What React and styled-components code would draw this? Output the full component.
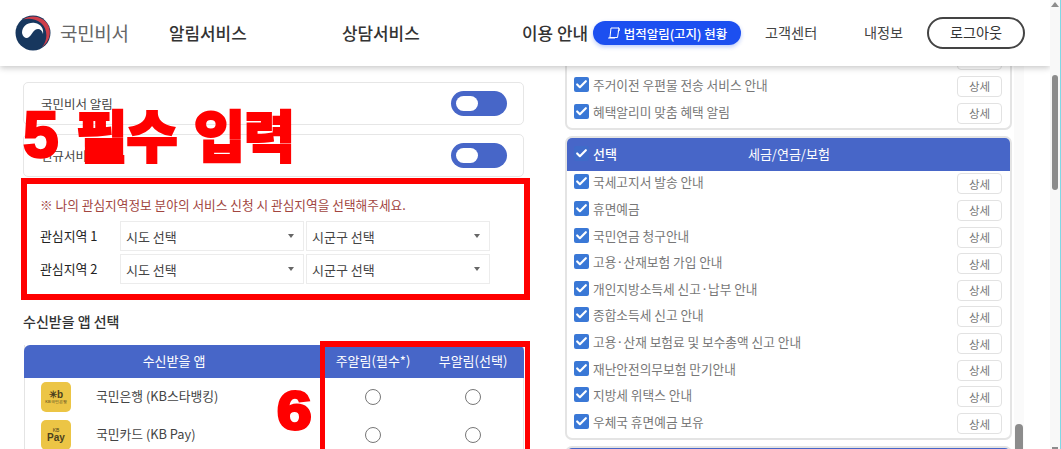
import React from 'react'
import styled, { createGlobalStyle } from 'styled-components'
import { Check } from 'lucide-react'

const GlobalStyle = createGlobalStyle`
  html, body { margin: 0; padding: 0; background: #fff; overflow: hidden; }
  * { box-sizing: border-box; }
  body { font-family: "Noto Sans CJK KR", "Noto Sans", sans-serif; }
`

const Page = styled.div`
  width: 1061px;
  height: 449px;
  display: flex;
  overflow: hidden;
`
const Screen = styled.div`
  width: 1050px;
  display: flex;
  flex-direction: column;
`
const Header = styled.header`
  height: 66px;
  flex: none;
  position: relative;
  z-index: 2;
  background: #fff;
  box-shadow: 0 2px 6px rgba(0, 0, 0, 0.22);
  display: flex;
  align-items: center;
  padding-left: 15px;
`
const Brand = styled.div`
  width: 154px;
  display: flex;
  align-items: center;
  gap: 9px;
  font-size: 19px;
  color: #666;
  letter-spacing: -0.3px;
`
const BrandName = styled.span`
  margin-bottom: 2px;
`
const NavItem = styled.a`
  width: ${(p) => p.$w}px;
  margin-bottom: 2px;
  font-size: 16.9px;
  font-weight: 500;
  color: #333;
  white-space: nowrap;
`
const Pill = styled.div`
  width: 148px;
  height: 24px;
  margin-right: 24px;
  border-radius: 12px;
  background: #1c4ff0;
  box-shadow: 0 2px 4px rgba(28, 79, 240, 0.3);
  color: #fff;
  font-size: 12.5px;
  font-weight: 500;
  display: flex;
  align-items: center;
  justify-content: center;
  gap: 3px;
  white-space: nowrap;
`
const SubNav = styled.a`
  width: ${(p) => p.$w}px;
  margin-bottom: 2px;
  font-size: 14.2px;
  color: #444;
  white-space: nowrap;
`
const Logout = styled.button`
  width: 98px;
  height: 32px;
  padding: 0 0 2px;
  border: 2px solid #444;
  border-radius: 16px;
  background: #fff;
  font-family: inherit;
  font-size: 14.2px;
  color: #333;
`
const Main = styled.main`
  flex: 1;
  min-height: 0;
  display: flex;
  overflow: hidden;
`
const LeftCol = styled.section`
  width: 565px;
  flex: none;
  padding: 16px 41px 0 23px;
`
const SwitchCard = styled.div`
  height: 43px;
  margin-bottom: 9px;
  padding: 0 16px 0 17px;
  border: 1px solid #e6e6e6;
  border-radius: 5px;
  display: flex;
  align-items: center;
  justify-content: space-between;
  font-size: 12.5px;
  color: #444;
`
const Toggle = styled.span`
  width: 56px;
  height: 25px;
  border-radius: 13px;
  background: #4766c8;
  padding: 5px;
  display: block;
  &::before {
    content: '';
    display: block;
    width: 22px;
    height: 15px;
    border-radius: 8px;
    background: #fff;
  }
`
const RegionBox = styled.div`
  margin: -8px -6px 0 -2px;
  height: 122px;
  border: 6px solid #ff0000;
  padding: 12px 0 0 13px;
`
const Notice = styled.p`
  margin: 0 0 7px;
  font-size: 12.7px;
  line-height: 18px;
  color: #a2463f;
`
const RegionRow = styled.div`
  display: flex;
  align-items: center;
  height: 30px;
  margin-bottom: 3px;
`
const RegionLabel = styled.span`
  width: 80px;
  margin-bottom: 2px;
  font-size: 12.9px;
  color: #222;
`
const FakeSelect = styled.div`
  width: 184px;
  height: 100%;
  margin-right: 2px;
  padding: 0 6px 0 5px;
  border: 1px solid #ececec;
  display: flex;
  align-items: center;
  justify-content: space-between;
  font-size: 13px;
  color: #444;
  &::after {
    content: '';
    margin-right: 3px;
    border-left: 3px solid transparent;
    border-right: 3px solid transparent;
    border-top: 4px solid #666;
  }
`
const SectionTitle = styled.h3`
  margin: 11px 0 14px;
  font-size: 14px;
  line-height: 20px;
  font-weight: 500;
  color: #333;
`
const TableWrap = styled.div`
  position: relative;
  width: 500px;
  margin-left: 1px;
  box-shadow: inset 1px 0 #e4e4e4, inset -1px 0 #e4e4e4;
`
const TableRow = styled.div`
  display: grid;
  grid-template-columns: 300px 98px 1fr;
  align-items: center;
  height: ${(p) => p.$h}px;
`
const TableHead = styled(TableRow)`
  padding-bottom: 3px;
  background: #4766c8;
  border-radius: 6px 6px 0 0;
  color: #fff;
  font-size: 13px;
  text-align: center;
`
const AppCell = styled.div`
  display: flex;
  align-items: center;
  padding-left: 17px;
  gap: 25px;
  font-size: 12.8px;
  color: #444;
`
const AppName = styled.span`
  margin-bottom: 4px;
`
const AppIcon = styled.span`
  width: 30px;
  height: 30px;
  flex: none;
  border-radius: 5px;
  background: #ecc545;
  color: #4b3f1d;
  display: flex;
  flex-direction: column;
  align-items: center;
  justify-content: center;
  line-height: 1;
  font-family: "Liberation Sans", sans-serif;
`
const Tiny = styled.span`
  font-size: ${(p) => p.$s}px;
  font-weight: ${(p) => p.$b || 400};
`
const RadioCell = styled.div`
  display: flex;
  justify-content: center;
`
const Radio = styled.span`
  width: 16px;
  height: 16px;
  border-radius: 50%;
  border: 1px solid #777;
  background: #fff;
`
const Outline = styled.div`
  position: absolute;
  top: -4px;
  left: 296px;
  right: -6px;
  height: 200px;
  border: 5px solid #ff0000;
  border-top-width: 6px;
  pointer-events: none;
`
const Big = styled.div`
  position: absolute;
  color: #ff0000;
  font-weight: 900;
  white-space: nowrap;
  pointer-events: none;
  z-index: 1;
`
const Big5 = styled(Big)`
  left: 23px;
  top: 95px;
  font-size: 56px;
  line-height: 76px;
  word-spacing: 6px;
  letter-spacing: -1.4px;
  -webkit-text-stroke: 2px #ff0000;
`
const Digit = styled.span`
  font-family: "Liberation Sans", sans-serif;
  font-size: 64px;
  font-weight: 700;
  letter-spacing: 0;
  -webkit-text-stroke: 2.5px #ff0000;
`
const Big6 = styled(Big)`
  left: 277px;
  top: 380px;
  font-family: "Liberation Sans", sans-serif;
  font-size: 54px;
  font-weight: 700;
  line-height: 60px;
  -webkit-text-stroke: 3px #ff0000;
  transform: scaleX(1.15);
  transform-origin: left center;
`
const RightCol = styled.section`
  width: 447px;
  flex: none;
  height: 100%;
  overflow: hidden;
`
const RightInner = styled.div`
  margin-top: -19.5px;
`
const ListCard = styled.div`
  margin-bottom: 6px;
  border: 2px solid #e4e4e4;
  border-top: ${(p) => (p.$flush ? 'none' : '2px solid #e4e4e4')};
  border-radius: ${(p) => (p.$flush ? '0 0 7px 7px' : '7px')};
  padding-bottom: ${(p) => (p.$flush ? 2 : 1)}px;
  background: #fff;
`
const ListHead = styled.div`
  height: 33px;
  margin-bottom: -1px;
  border-radius: 5px 5px 0 0;
  padding: 0 0 3px 7px;
  background: #4766c8;
  color: #fff;
  font-size: 13px;
  font-weight: 500;
  display: flex;
  align-items: center;
  gap: 4px;
`
const HeadTitle = styled.span`
  margin-left: 127px;
  font-weight: 400;
`
const Item = styled.div`
  height: 26.65px;
  padding: 0 8px 0 7px;
  display: flex;
  align-items: center;
  gap: 4px;
  font-size: 12.7px;
  color: #777;
`
const Box = styled.span`
  width: 15px;
  height: 15px;
  flex: none;
  margin-bottom: ${(p) => (p.$head ? 0 : 4)}px;
  border-radius: 2px;
  background: ${(p) => (p.$head ? '#3f6bc9' : '#3a78d6')};
  color: #fff;
  display: flex;
  align-items: center;
  justify-content: center;
`
const Label = styled.span`
  flex: 1;
  margin-bottom: 4px;
  white-space: nowrap;
`
const Detail = styled.button`
  width: 45px;
  height: 21px;
  padding: 0;
  border: 1px solid #e2e2e2;
  border-radius: 4px;
  background: #fff;
  font-family: inherit;
  font-size: 11.5px;
  color: #777;
`
const InnerBar = styled.div`
  width: 10px;
  flex: none;
  margin-left: 2px;
  background: #fafafa;
  padding-top: 358px;
  display: flex;
  justify-content: center;
  &::before {
    content: '';
    width: 8px;
    height: 40px;
    border-radius: 4px;
    background: #8c8c8c;
  }
`
const OuterBar = styled.aside`
  width: 11px;
  flex: none;
  padding-top: 2px;
  background: #f8f8f8;
  border-right: 1px solid #7fd9e6;
  display: flex;
  flex-direction: column;
  align-items: center;
  position: relative;
  z-index: 3;
`
const UpArrow = styled.span`
  border-left: 4px solid transparent;
  border-right: 4px solid transparent;
  border-bottom: 5px solid #8c8c8c;
`
const OuterThumb = styled.div`
  width: 6px;
  height: 115px;
  margin-top: 68px;
  border-radius: 3px;
  background: #8c8c8c;
`
const OuterNub = styled.div`
  width: 6px;
  height: 2px;
  margin-top: auto;
  background: #8c8c8c;
`

const Logo = () => (
  <svg width="36" height="36" viewBox="0 0 36 36">
    <circle cx="18" cy="18" r="17.5" fill="#17375e" />
    <path d="M8 4.500C16-1 28 1 33 10c4 8 1 17-6 22 6-7 6-18-1-24C20 3 13 3 8 4.500Z" fill="#cf3f4b" />
    <path d="M7 18C7 11 13 7 20 8c6 1 9 6 8 11-1-5-5-6-8-4-3 2-3 5-6 7-2 2-6 1-7-4Z" fill="#fff" />
  </svg>
)

const DocIcon = () => (
  <svg width="14" height="14" viewBox="0 0 14 14" fill="none" stroke="#fff" strokeWidth="1">
    <path d="M4 2h8l-1.500 9.500H2.500L1.500 12h6.500l1-1" />
    <path d="M4 2 3 11M11 2c1 0 1.500.5 1.500 1.500L12 5h-1.200" />
  </svg>
)

const Tick = ({ size = 13 }) => <Check size={size} strokeWidth={4} />

const taxItems = [
  '국세고지서 발송 안내',
  '휴면예금',
  '국민연금 청구안내',
  '고용·산재보험 가입 안내',
  '개인지방소득세 신고·납부 안내',
  '종합소득세 신고 안내',
  '고용·산재 보험료 및 보수총액 신고 안내',
  '재난안전의무보험 만기안내',
  '지방세 위택스 안내',
  '우체국 휴면예금 보유',
]

const ListItem = ({ text }) => (
  <Item>
    <Box><Tick /></Box>
    <Label>{text}</Label>
    <Detail>{text ? '상세' : ''}</Detail>
  </Item>
)

export default function App() {
  return (
    <Page>
      <GlobalStyle />
      <Screen>
        <Header>
          <Brand><Logo /><BrandName>국민비서</BrandName></Brand>
          <NavItem $w={173}>알림서비스</NavItem>
          <NavItem $w={180}>상담서비스</NavItem>
          <NavItem $w={71}>이용 안내</NavItem>
          <Pill><DocIcon />법적알림(고지) 현황</Pill>
          <SubNav $w={99}>고객센터</SubNav>
          <SubNav $w={63}>내정보</SubNav>
          <Logout>로그아웃</Logout>
        </Header>
        <Big5><Digit>5</Digit> 필수 입력</Big5>
        <Big6>6</Big6>
        <Main>
          <LeftCol>
            <SwitchCard>국민비서 알림<Toggle /></SwitchCard>
            <SwitchCard>신규서비스 알림<Toggle /></SwitchCard>
            <RegionBox>
              <Notice>※ 나의 관심지역정보 분야의 서비스 신청 시 관심지역을 선택해주세요.</Notice>
              <RegionRow>
                <RegionLabel>관심지역 1</RegionLabel>
                <FakeSelect>시도 선택</FakeSelect>
                <FakeSelect>시군구 선택</FakeSelect>
              </RegionRow>
              <RegionRow>
                <RegionLabel>관심지역 2</RegionLabel>
                <FakeSelect>시도 선택</FakeSelect>
                <FakeSelect>시군구 선택</FakeSelect>
              </RegionRow>
            </RegionBox>
            <SectionTitle>수신받을 앱 선택</SectionTitle>
            <TableWrap>
              <TableHead $h={33}>
                <span>수신받을 앱</span>
                <span>주알림(필수*)</span>
                <span>부알림(선택)</span>
              </TableHead>
              <TableRow $h={38}>
                <AppCell>
                  <AppIcon><Tiny $s={10} $b={700}>✳b</Tiny><Tiny $s={4}>KB국민은행</Tiny></AppIcon>
                  <AppName>국민은행 (KB스타뱅킹)</AppName>
                </AppCell>
                <RadioCell><Radio /></RadioCell>
                <RadioCell><Radio /></RadioCell>
              </TableRow>
              <TableRow $h={38}>
                <AppCell>
                  <AppIcon><Tiny $s={5}>KB</Tiny><Tiny $s={10} $b={700}>Pay</Tiny></AppIcon>
                  <AppName>국민카드 (KB Pay)</AppName>
                </AppCell>
                <RadioCell><Radio /></RadioCell>
                <RadioCell><Radio /></RadioCell>
              </TableRow>
              <Outline />
            </TableWrap>
          </LeftCol>
          <RightCol>
            <RightInner>
              <ListCard $flush>
                <ListItem text="" />
                <ListItem text="주거이전 우편물 전송 서비스 안내" />
                <ListItem text="혜택알리미 맞춤 혜택 알림" />
              </ListCard>
              <ListCard>
                <ListHead>
                  <Box $head><Tick /></Box>
                  선택
                  <HeadTitle>세금/연금/보험</HeadTitle>
                </ListHead>
                {taxItems.map((t) => <ListItem key={t} text={t} />)}
              </ListCard>
              <ListCard>
                <ListHead />
              </ListCard>
            </RightInner>
          </RightCol>
          <InnerBar />
        </Main>
      </Screen>
      <OuterBar>
        <UpArrow />
        <OuterThumb />
        <OuterNub />
      </OuterBar>
    </Page>
  )
}
